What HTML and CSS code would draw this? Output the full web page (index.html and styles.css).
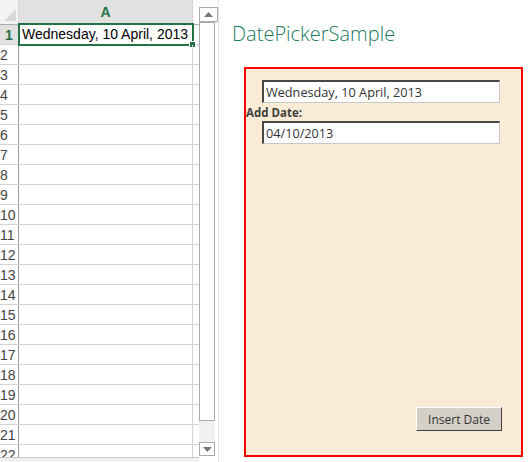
FILE: index.html
```html
<!DOCTYPE html>
<html>
<head>
<meta charset="utf-8">
<link rel="stylesheet" href="styles.css">
</head>
<body>
<div class="app">
  <div class="sheet">
    <div class="gridwrap">
      <div class="grid">
        <div class="hdr">
          <div class="corner"><svg width="19" height="24" viewBox="0 0 19 24"><polygon points="16,9 16,21 4,21" fill="#d8d8d8"/></svg></div>
          <div class="colA">A</div>
          <div class="hgap"></div>
        </div>
        <div class="row sel"><div class="rn">1</div><div class="cell"><div class="active">Wednesday, 10 April, 2013<span class="handle"></span></div></div></div>
        <div class="row"><div class="rn">2</div><div class="cell"></div></div>
        <div class="row"><div class="rn">3</div><div class="cell"></div></div>
        <div class="row"><div class="rn">4</div><div class="cell"></div></div>
        <div class="row"><div class="rn">5</div><div class="cell"></div></div>
        <div class="row"><div class="rn">6</div><div class="cell"></div></div>
        <div class="row"><div class="rn">7</div><div class="cell"></div></div>
        <div class="row"><div class="rn">8</div><div class="cell"></div></div>
        <div class="row"><div class="rn">9</div><div class="cell"></div></div>
        <div class="row"><div class="rn">10</div><div class="cell"></div></div>
        <div class="row"><div class="rn">11</div><div class="cell"></div></div>
        <div class="row"><div class="rn">12</div><div class="cell"></div></div>
        <div class="row"><div class="rn">13</div><div class="cell"></div></div>
        <div class="row"><div class="rn">14</div><div class="cell"></div></div>
        <div class="row"><div class="rn">15</div><div class="cell"></div></div>
        <div class="row"><div class="rn">16</div><div class="cell"></div></div>
        <div class="row"><div class="rn">17</div><div class="cell"></div></div>
        <div class="row"><div class="rn">18</div><div class="cell"></div></div>
        <div class="row"><div class="rn">19</div><div class="cell"></div></div>
        <div class="row"><div class="rn">20</div><div class="cell"></div></div>
        <div class="row"><div class="rn">21</div><div class="cell"></div></div>
        <div class="row"><div class="rn">22</div><div class="cell"></div></div>
      </div>
      <div class="gridfoot"></div>
    </div>
    <div class="vscroll">
      <div class="sbtn up"><svg width="9" height="5" viewBox="0 0 9 5"><polygon points="0,5 9,5 4.5,0" fill="#777"/></svg></div>
      <div class="thumb"></div>
      <div class="track"></div>
      <div class="sbtn down"><svg width="9" height="5" viewBox="0 0 9 5"><polygon points="0,0 9,0 4.5,5" fill="#777"/></svg></div>
    </div>
  </div>
  <div class="pane">
    <h1 class="title">DatePickerSample</h1>
    <div class="box">
      <div class="field">Wednesday, 10 April, 2013</div>
      <div class="label">Add Date:</div>
      <div class="field">04/10/2013</div>
      <button class="btn">Insert Date</button>
    </div>
  </div>
</div>
</body>
</html>
```
FILE: styles.css
```css
html, body {
  margin: 0;
  padding: 0;
  background: #ffffff;
}
.app {
  display: flex;
  width: 529px;
  height: 462px;
  overflow: hidden;
}
.sheet {
  display: flex;
  width: 218px;
  height: 462px;
  border-right: 1px solid #e3e3e3;
  flex: none;
}
.gridwrap {
  width: 199px;
  display: flex;
  flex-direction: column;
}
.grid {
  height: 457px;
  overflow: hidden;
  font-family: "Liberation Sans", Arial, sans-serif;
}
.gridfoot {
  flex: 1;
  background: #f0f0f0;
  border-top: 1px solid #c6c6c6;
}
.hdr {
  display: flex;
  height: 24px;
  border-bottom: 1px solid #ababab;
}
.corner {
  width: 18px;
  background: #f3f3f3;
  border-right: 1px solid #d4d4d4;
}
.colA {
  width: 173px;
  background: #e1e1e1;
  border-right: 1px solid #d4d4d4;
  border-bottom: 2px solid #217346;
  margin-bottom: -1px;
  color: #217346;
  font-weight: bold;
  font-size: 14px;
  text-align: center;
  line-height: 24px;
}
.hgap {
  flex: 1;
  background: #ffffff;
}
.row {
  display: flex;
  height: 19px;
  border-bottom: 1px solid #d4d4d4;
}
.rn {
  border-right: 1px solid #9b9b9b;
  font-size: 14px;
  color: #444;
  line-height: 20px;
  padding-left: 0;
  box-sizing: border-box;
  width: 19px;
  white-space: nowrap;
}
.sel .rn {
  background: #e1e1e1;
  color: #217346;
  font-weight: bold;
  text-align: center;
}
.cell {
  width: 173px;
  border-right: 1px solid #d4d4d4;
  position: relative;
}
.active {
  position: absolute;
  left: -1px;
  top: -2px;
  width: 170px;
  height: 19px;
  border: 2px solid #217346;
  font-size: 14px;
  line-height: 19px;
  padding-left: 2px;
  box-sizing: content-box;
  color: #000;
  white-space: nowrap;
  background: #fff;
}
.handle {
  position: absolute;
  right: -4px;
  bottom: -4px;
  width: 5px;
  height: 5px;
  background: #217346;
  border: 1px solid #fff;
}
.vscroll {
  width: 19px;
  display: flex;
  flex-direction: column;
  padding-top: 7px;
  box-sizing: border-box;
  background: #fff;
}
.sbtn {
  height: 15px;
  width: 17px;
  border: 1px solid #ababab;
  box-sizing: border-box;
  display: flex;
  align-items: center;
  justify-content: center;
  background: #fff;
}
.up {
  width: 19px;
}
.thumb {
  height: 399px;
  width: 16px;
  border: 1px solid #ababab;
  box-sizing: border-box;
  background: #fff;
}
.track {
  height: 21px;
  width: 16px;
  background: #f0f0f0;
}
.down {
  width: 16px;
  height: 14px;
}
.pane {
  flex: 1;
  padding-left: 13px;
}
.title {
  margin: 19px 0 0 0;
  font-family: "Open Sans", sans-serif;
  font-weight: 300;
  font-size: 20px;
  line-height: 30px;
  color: #1c7a62;
}
.box {
  margin: 18px 0 0 12px;
  width: 275px;
  height: 375px;
  border: 2px solid #ff0000;
  background: #faebd7;
  display: flex;
  flex-direction: column;
  align-items: flex-start;
  padding-top: 11px;
  box-sizing: content-box;
  font-family: "Open Sans", sans-serif;
}
.field {
  margin-left: 16px;
  width: 233px;
  height: 20px;
  border-top: 2px solid #474747;
  border-left: 2px solid #474747;
  border-bottom: 1px solid #c8c8c8;
  border-right: 1px solid #c8c8c8;
  background: #fff;
  font-size: 12.7px;
  line-height: 21px;
  padding-left: 2px;
  color: #333;
  white-space: nowrap;
}
.label {
  font-size: 11.5px;
  font-weight: bold;
  color: #3f3f3f;
  line-height: 16px;
  margin: 2px 0 0 0;
}
.btn {
  margin-top: auto;
  margin-bottom: 24px;
  align-self: flex-end;
  margin-right: 19px;
  width: 86px;
  height: 24px;
  background: #d4d0c8;
  border: 1px solid;
  border-color: #fff #404040 #404040 #fff;
  font-family: "Open Sans", sans-serif;
  font-size: 12px;
  color: #333;
  padding: 0;
}
```
